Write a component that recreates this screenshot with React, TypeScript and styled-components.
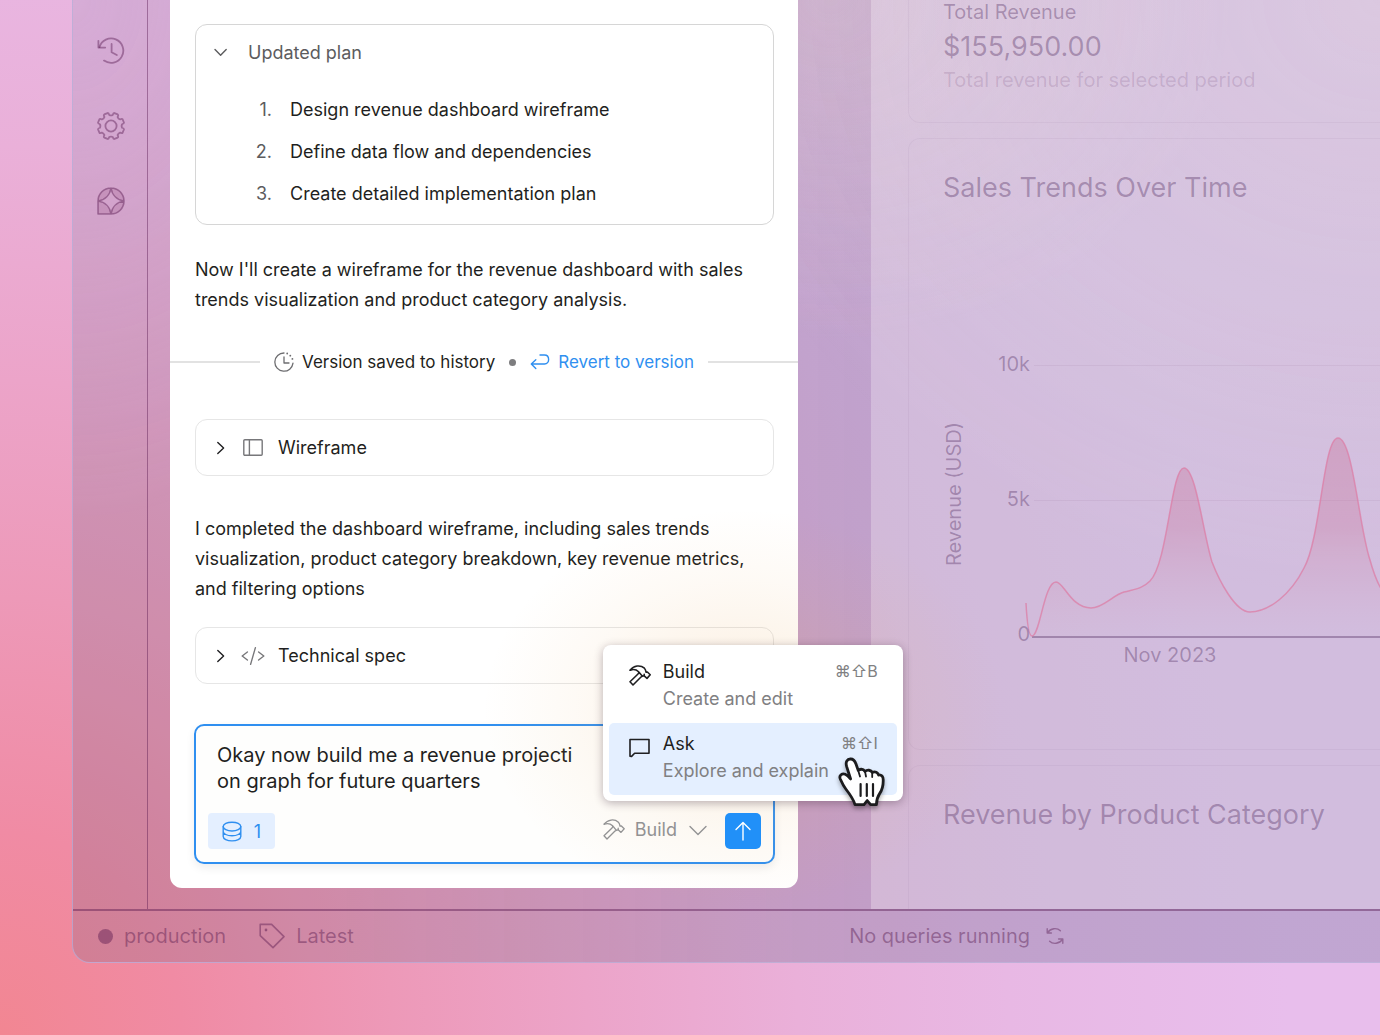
import React, { useState } from "react";
import styled, { createGlobalStyle } from "styled-components";

const ink = "#1f1f21";
const muted = "#808082";
const blue = "#2f8ff0";
const plum = "rgba(80, 18, 72, 0.41)";
const plumSoft = "rgba(60, 20, 75, 0.32)";
const plumFaint = "rgba(70, 20, 75, 0.14)";

const GlobalStyle = createGlobalStyle`
  *, *::before, *::after { box-sizing: border-box; }
  body {
    margin: 0;
    font-family: Inter, "Liberation Sans", sans-serif;
    font-size: 18px;
    color: ${ink};
  }
  button, textarea { font: inherit; color: inherit; }
  button { border: 0; padding: 0; background: none; cursor: pointer; }
  h2, p, ol { margin: 0; padding: 0; font-weight: 400; }
  svg { display: block; flex: none; }
`;

const Desktop = styled.div`
  display: flex;
  height: 100vh;
  min-height: 1035px;
  padding: 0 0 72px 72px;
  overflow: hidden;
  background: radial-gradient(
    1400px 1560px at 0 100%,
    #f28692 0%,
    #f08ba4 13%,
    #ed99b8 28%,
    #eca4c9 42%,
    #eab0d9 57%,
    #e8b8e4 72%,
    #e8beec 92%
  );
`;

const Window = styled.div`
  flex: 1;
  min-width: 0;
  display: flex;
  flex-direction: column;
  border: 1px solid rgba(185, 175, 220, 0.7);
  border-width: 0 0 1px 1px;
  border-bottom-left-radius: 18px;
  background:
    radial-gradient(700px 600px at 100% 0, rgba(255, 240, 225, 0.2), transparent),
    radial-gradient(400px 340px at 58% 0, rgba(225, 200, 195, 0.32), transparent),
    radial-gradient(400px 520px at 0 0, rgba(240, 190, 235, 0.3), transparent),
    linear-gradient(to right, transparent 20%, rgba(85, 100, 150, 0.08) 60%),
    rgba(60, 85, 115, 0.17);
`;

const Workspace = styled.div`
  flex: 1;
  min-height: 0;
  display: flex;
`;

const Sidebar = styled.nav`
  flex: 0 0 75px;
  display: flex;
  flex-direction: column;
  align-items: center;
  gap: 47px;
  padding: 37px 0 0 1px;
  border-right: 1px solid ${plum};
`;

const SideButton = styled.button`
  color: ${plum};
  width: 28px;
  height: 28px;
`;

const Chat = styled.main`
  position: relative;
  z-index: 1;
  flex: 0 1 628px;
  min-width: 0;
  display: flex;
  flex-direction: column;
  margin: 0 73px 21px 22px;
  padding: 24px 24px 24px 25px;
  background: #fff;
  border-radius: 0 0 12px 12px;
`;

const PlanCard = styled.section`
  height: 201px;
  border: 1px solid #d6d6d6;
  border-radius: 12px;
`;

const PlanHeader = styled.button`
  display: flex;
  align-items: center;
  gap: 20px;
  height: 54px;
  padding: 0 18px;
  color: #5c5c5e;
`;

const PlanList = styled.ol`
  list-style: none;
  counter-reset: step;
  padding: 10px 0 0 52px;
`;

const PlanItem = styled.li`
  counter-increment: step;
  display: grid;
  grid-template-columns: 24px 1fr;
  column-gap: 18px;
  line-height: 42px;

  &::before {
    content: counter(step) ".";
    color: #5c5c5e;
    text-align: right;
  }
`;

const Message = styled.p<{ $gap: number }>`
  margin-top: ${(p) => p.$gap}px;
  line-height: 30px;
`;

const VersionRow = styled.div`
  display: flex;
  align-items: center;
  gap: 14px;
  height: 28px;
  margin: 33px -24px 0 -25px;
  font-size: 17px;

  &::before,
  &::after {
    content: "";
    flex: 1;
    height: 2px;
    background: #e2e2e2;
  }
`;

const VersionText = styled.span`
  display: flex;
  align-items: center;
  gap: 8px;
`;

const Dot = styled.span`
  width: 7px;
  height: 7px;
  border-radius: 50%;
  background: #7d7d7f;
`;

const RevertLink = styled.a`
  display: flex;
  align-items: center;
  gap: 8px;
  color: ${blue};
  text-decoration: none;
`;

const Attachment = styled.button<{ $gap: number }>`
  display: flex;
  align-items: center;
  gap: 13px;
  height: 57px;
  margin-top: ${(p) => p.$gap}px;
  padding: 0 18px;
  border: 1px solid #e6e6e6;
  border-radius: 12px;
  text-align: left;
`;

const ArtifactIcon = styled.span`
  display: flex;
  justify-content: center;
  width: 24px;
  color: #77777a;
`;

const Composer = styled.form`
  display: flex;
  flex-direction: column;
  height: 140px;
  margin: 40px -1px 0;
  border: 2px solid ${blue};
  border-radius: 10px;
  background: #fefefd;
  box-shadow: 0 4px 10px rgba(0, 0, 0, 0.07);
`;

const Prompt = styled.textarea`
  flex: 1;
  margin: 16px 21px 0;
  padding: 0;
  border: 0;
  outline: 0;
  resize: none;
  overflow: hidden;
  background: transparent;
  font-size: 20px;
  line-height: 26px;
`;

const ComposerBar = styled.div`
  display: flex;
  align-items: center;
  height: 36px;
  margin: 0 12px 13px;
`;

const SourceChip = styled.button`
  display: flex;
  align-items: center;
  justify-content: center;
  gap: 12px;
  width: 67px;
  height: 36px;
  margin-right: auto;
  border-radius: 4px;
  background: #e4efff;
  color: ${blue};
`;

const ModePicker = styled.div`
  position: relative;
  margin-right: 18px;
`;

const ModeButton = styled.button`
  position: relative;
  display: flex;
  align-items: center;
  gap: 10px;
  height: 36px;
  padding-bottom: 3px;
  color: #929293;
`;

const Glow = styled.span`
  position: absolute;
  left: -120px;
  bottom: -60px;
  width: 520px;
  height: 400px;
  pointer-events: none;
  background: radial-gradient(closest-side, rgba(235, 170, 90, 0.2), rgba(235, 170, 90, 0.06) 65%, transparent);
`;

const SendButton = styled.button`
  position: relative;
  display: grid;
  place-items: center;
  width: 36px;
  height: 36px;
  border-radius: 5px;
  background: #2190f8;
  color: #fff;
`;

const Menu = styled.div`
  position: absolute;
  z-index: 1;
  left: 0;
  bottom: calc(100% + 12px);
  width: 300px;
  padding: 6px;
  border-radius: 8px;
  background: #fff;
  box-shadow: 0 2px 10px rgba(40, 20, 40, 0.32);
`;

const MenuItem = styled.button<{ $active?: boolean }>`
  position: relative;
  display: grid;
  grid-template-columns: 22px 1fr auto;
  column-gap: 12px;
  width: 100%;
  height: 72px;
  padding: 7px 19px 0 20px;
  border-radius: 5px;
  background: ${(p) => (p.$active ? "#e4efff" : "transparent")};
  text-align: left;
  line-height: 27px;

  svg { margin-top: 7px; }
`;

const MenuHint = styled.span`
  display: block;
  color: ${muted};
  white-space: nowrap;
`;

const MenuText = styled.span`
  min-width: 0;
`;

const Shortcut = styled.kbd`
  font-family: Inter, "DejaVu Sans", sans-serif;
  font-size: 16px;
  color: ${muted};
`;

const Pointer = styled.span`
  position: absolute;
  right: 12px;
  top: 34px;
  filter: drop-shadow(0 3px 2px rgba(0, 0, 0, 0.3));

  svg { margin: 0; }
`;

const Dashboard = styled.section`
  flex: 1 0 0;
  min-width: 0;
  display: flex;
  flex-direction: column;
  gap: 15px;
  padding-left: 37px;
  overflow: hidden;
  color: ${plumSoft};
  background: rgba(255, 250, 255, 0.28);
`;

const Panel = styled.article<{ $fill?: boolean }>`
  flex: ${(p) => (p.$fill ? "1" : "none")};
  padding: 30px 0 0 34px;
  border: 1px solid rgba(110, 70, 120, 0.06);
  border-right: 0;
  border-bottom-width: ${(p) => (p.$fill ? "0" : "1px")};
  border-radius: ${(p) => (p.$fill ? "12px 0 0 0" : "12px 0 0 12px")};
`;

const MetricPanel = styled(Panel)`
  padding-top: 0;
  padding-bottom: 32px;
  border-top: 0;
  border-top-left-radius: 0;
`;

const MetricName = styled.h2`
  font-size: 20px;
  line-height: 24px;
`;

const MetricValue = styled.p`
  font-size: 27px;
  line-height: 46px;
`;

const MetricNote = styled.p`
  font-size: 20px;
  line-height: 20px;
  color: ${plumFaint};
`;

const PanelTitle = styled.h2`
  font-size: 27px;
  line-height: 38px;
  white-space: nowrap;
`;

const Chart = styled.svg`
  width: 100%;
  height: 401px;
  margin-top: 141px;
  font-size: 20px;
`;

const StatusBar = styled.footer`
  flex: none;
  display: grid;
  grid-template-columns: 7fr 5fr;
  column-gap: 8px;
  align-items: center;
  height: 53px;
  padding: 0 0 1px 25px;
  border-top: 2px solid ${plum};
  color: ${plum};
  font-size: 20px;
`;

const StatusGroup = styled.div`
  display: flex;
  align-items: center;
  gap: 33px;
`;

const StatusItem = styled.button<{ $gap: number }>`
  display: flex;
  align-items: center;
  gap: ${(p) => p.$gap}px;
`;

const EnvDot = styled.span`
  width: 15px;
  height: 15px;
  border-radius: 50%;
  background: currentColor;
`;

const line = {
  fill: "none",
  stroke: "currentColor",
  strokeLinecap: "round" as const,
  strokeLinejoin: "round" as const,
  "aria-hidden": true,
};

const HistoryIcon = () => (
  <svg width="28" height="28" viewBox="0 0 28 28" {...line} strokeWidth="1.8">
    <path d="M2.4 10.2A12.2 12.2 0 1 1 7 23.6" />
    <path d="M1.4 3.8V10.6H8.2M14.6 7V15.2L19.8 18" />
  </svg>
);

const gearPath = Array.from({ length: 8 }, (_, i) => {
  const at = (deg: number, r: number) => {
    const a = ((i * 45 + deg) * Math.PI) / 180;
    return `${(14 + r * Math.cos(a)).toFixed(2)} ${(14 + r * Math.sin(a)).toFixed(2)}`;
  };
  return `${i === 0 ? "M" : "L"}${at(9, 11.2)}Q${at(10, 13.4)} ${at(15, 13.4)}L${at(30, 13.4)}Q${at(35, 13.4)} ${at(36, 11.2)}Q${at(45, 10.2)} ${at(54, 11.2)}`;
}).join("") + "Z";

const GearIcon = () => (
  <svg width="28" height="28" viewBox="0 0 28 28" {...line} strokeWidth="1.8">
    <path d={gearPath} />
    <circle cx="14" cy="14" r="5.6" />
  </svg>
);

const SparkIcon = () => (
  <svg width="28" height="28" viewBox="0 0 28 28" {...line} strokeWidth="1.6">
    <path
      d="M1 14A13 13 0 1 1 14 27H1Z M14 1C13 8 8 13 1 14C8 15 13 20 14 27C15 20 20 15 27 14C20 13 15 8 14 1Z"
      fill="rgba(120, 40, 90, 0.14)"
      fillRule="evenodd"
    />
  </svg>
);

const Chevron = ({ down, size = 14 }: { down?: boolean; size?: number }) => (
  <svg width={size} height={size} viewBox={`0 0 ${size} ${size}`} {...line} strokeWidth="1.4">
    {size === 14 ? (
      <path d={down ? "M1 4.4L6.6 10.2L12.2 4.4" : "M3.8 1.4L9.6 7L3.8 12.6"} />
    ) : (
      <path d="M3 6.6L11 14.6L19 6.6" />
    )}
  </svg>
);

const SavedIcon = () => (
  <svg width="20" height="20" viewBox="0 0 20 20" {...line} strokeWidth="1.3" color="#6d6d70">
    <path d="M10 1A9.1 9.1 0 1 0 19 11.2M10 5V11H15" />
    <path d="M13.2 1.5V1.6M16.3 3.6V3.7M18.4 6.8V6.9" strokeWidth="1.8" />
  </svg>
);

const RevertIcon = () => (
  <svg width="20" height="18" viewBox="0 0 20 18" {...line} strokeWidth="1.4">
    <path d="M10 2H14.5C20 2 20 11 14.5 11H1.5M5.8 6.8L1.3 11L5.8 15.4" />
  </svg>
);

const LayoutIcon = () => (
  <svg width="20" height="17" viewBox="0 0 20 17" {...line} strokeWidth="1.4">
    <rect x="0.8" y="0.8" width="18.4" height="15.4" rx="1" />
    <path d="M6.4 1V16" />
  </svg>
);

const CodeIcon = () => (
  <svg width="24" height="20" viewBox="0 0 24 20" {...line} strokeWidth="1.4">
    <path d="M6.4 6L1.2 10L6.4 14M17.6 6L22.8 10L17.6 14M14.4 1.6L9.6 18.4" />
  </svg>
);

const HammerIcon = ({ weight = 1.5 }: { weight?: number }) => (
  <svg width="22" height="21" viewBox="0 0 22 21" {...line} strokeWidth={weight}>
    <path d="M1.2 5.2C4.6 0.4 11.4 -0.4 15.4 3.2C16.8 4.6 16.8 6 17 7.2L18.4 7L21.2 9.8L18 13.4L15.2 10.8V9.2" />
    <path d="M1.2 5.2C4.4 4 7 4.2 9.6 6.8C9.8 7.4 9.6 8.4 9 9L1 16.8L4 20L12 12C12.6 11.2 13.8 11 15.2 10.8M9.8 7L13 10.8" />
  </svg>
);

const BubbleIcon = () => (
  <svg width="22" height="22" viewBox="0 0 22 22" {...line} strokeWidth="1.6">
    <path d="M1 2.5H20V16.2H5.6L2.6 19.4L1 19.2Z" />
  </svg>
);

const DatabaseIcon = () => (
  <svg width="20" height="21" viewBox="0 0 20 21" {...line} strokeWidth="1.4">
    <ellipse cx="10" cy="5.6" rx="8.8" ry="4.4" />
    <path d="M1.2 5.6V15.4C1.2 17.8 5 19.9 10 19.9S18.8 17.8 18.8 15.4V5.6M1.2 10.4C1.2 12.8 5 14.8 10 14.8S18.8 12.8 18.8 10.4" />
  </svg>
);

const ArrowUpIcon = () => (
  <svg width="20" height="20" viewBox="0 0 20 20" {...line} strokeWidth="1.4">
    <path d="M10 19V1.6M3 8.6L10 1.6L17 8.6" />
  </svg>
);

const TagIcon = () => (
  <svg width="26" height="26" viewBox="0 0 26 26" {...line} strokeWidth="1.6">
    <path d="M1.2 1.4H12.6L25 13.6L14 24.6L1.2 12.6Z" />
    <circle cx="7" cy="7" r="0.6" fill="currentColor" />
  </svg>
);

const SyncIcon = () => (
  <svg width="18" height="18" viewBox="0 0 18 18" {...line} strokeWidth="1.4">
    <path d="M1.2 1.8V6H5.4M1.6 5.6C4.6 1 11 0.4 14.4 3.8M16.8 16.2V12H12.6M16.4 12.4C13.4 17 7 17.6 3.6 14.2" />
  </svg>
);

const HandIcon = () => (
  <svg width="47" height="51" viewBox="0 0 47 51" aria-hidden="true" strokeLinejoin="round" strokeLinecap="round">
    <path
      d="M12.6 22L8.6 9.4C7.2 4.4 9.4 2.2 12.4 2C15.4 1.8 16.8 3.8 18 7L20.2 13.4C23 11.6 25.6 12.4 27 14.4C29.4 12.4 33 13 34.2 15.4C37.4 14 39.8 15.6 40.6 18C43.6 17.6 45.2 19.6 45.2 22.6C45.4 29 44.6 32.4 41.6 36.6C39.4 39.8 38.6 42 38.4 47.6H32.6L29.2 43.6L26 47.6H17C15.4 42 12 37.4 7.8 32C5 28.4 3.8 25.4 2.2 21.8C0.8 18.4 4.2 16 7.2 17.2C9.6 18.2 11 20 12.6 22Z"
      fill="#fff"
      stroke="#1c1c1e"
      strokeWidth="2.8"
    />
    <path d="M20.2 13.4L22 19.5M27 14.4L28 19.5M34.2 15.4V20" fill="none" stroke="#1c1c1e" strokeWidth="1.8" />
    <path d="M22.6 27V39M28.8 27V39M35 27V39" fill="none" stroke="#1c1c1e" strokeWidth="2.2" />
  </svg>
);

const curve =
  "M83 255C84 275 86 288 89 288C97 288 101 234 113 234C121 234 128 260 148 260C160 260 170 247 181 244C192 241 199 241 207 233C225 215 228 120 241 120C253 120 260 185 269 214C276 232 292 264 307 264C326 264 348 246 361 220C378 190 380 90 395 90C410 90 416 180 427 212C433 234 440 248 455 262L480 270";

const RevenueChart = () => (
  <Chart role="img" aria-label="Sales trends over time">
    <defs>
      <linearGradient id="area" x1="0" y1="90" x2="0" y2="288" gradientUnits="userSpaceOnUse">
        <stop offset="0" stopColor="#c8648c" stopOpacity="0.32" />
        <stop offset="0.45" stopColor="#c8648c" stopOpacity="0.26" />
        <stop offset="1" stopColor="#d896b4" stopOpacity="0" />
      </linearGradient>
    </defs>
    <g stroke={plumFaint} strokeOpacity="0.4">
      <path d="M91 17.5H900M91 152.5H900" />
    </g>
    <path d={`${curve}V289H89Z`} fill="url(#area)" />
    <path d="M89 289H900" stroke={plumSoft} strokeWidth="2" />
    <path d={curve} fill="none" stroke="#dc7ea6" strokeOpacity="0.75" strokeWidth="1.5" />
    <g fill={plumSoft}>
      <text x="87" y="23" textAnchor="end">10k</text>
      <text x="87" y="158" textAnchor="end">5k</text>
      <text x="87" y="293" textAnchor="end">0</text>
      <text x="227" y="314" textAnchor="middle">Nov 2023</text>
      <text transform="translate(18 146) rotate(-90)" textAnchor="middle">Revenue (USD)</text>
    </g>
  </Chart>
);

export default function App() {
  const [prompt, setPrompt] = useState("Okay now build me a revenue projecti\non graph for future quarters");

  return (
    <>
      <GlobalStyle />
      <Desktop>
        <Window>
          <Workspace>
            <Sidebar>
              <SideButton aria-label="History"><HistoryIcon /></SideButton>
              <SideButton aria-label="Settings"><GearIcon /></SideButton>
              <SideButton aria-label="Assistant"><SparkIcon /></SideButton>
            </Sidebar>

            <Chat>
              <PlanCard>
                <PlanHeader aria-expanded="true">
                  <Chevron down />
                  Updated plan
                </PlanHeader>
                <PlanList>
                  <PlanItem>Design revenue dashboard wireframe</PlanItem>
                  <PlanItem>Define data flow and dependencies</PlanItem>
                  <PlanItem>Create detailed implementation plan</PlanItem>
                </PlanList>
              </PlanCard>

              <Message $gap={30}>
                Now I'll create a wireframe for the revenue dashboard with sales trends visualization and product category analysis.
              </Message>

              <VersionRow>
                <VersionText><SavedIcon />Version saved to history</VersionText>
                <Dot />
                <RevertLink href="#revert"><RevertIcon />Revert to version</RevertLink>
              </VersionRow>

              <Attachment $gap={43}>
                <Chevron />
                <ArtifactIcon><LayoutIcon /></ArtifactIcon>
                Wireframe
              </Attachment>

              <Message $gap={38}>
                I completed the dashboard wireframe, including sales trends visualization, product category breakdown, key revenue metrics, and filtering options
              </Message>

              <Attachment $gap={23}>
                <Chevron />
                <ArtifactIcon><CodeIcon /></ArtifactIcon>
                Technical spec
              </Attachment>

              <Composer onSubmit={(e) => e.preventDefault()}>
                <Prompt aria-label="Prompt" value={prompt} onChange={(e) => setPrompt(e.target.value)} />
                <ComposerBar>
                  <SourceChip type="button"><DatabaseIcon />1</SourceChip>
                  <ModePicker>
                    <Glow />
                    <ModeButton type="button" aria-haspopup="menu" aria-expanded="true">
                      <HammerIcon weight={1.3} />
                      Build
                      <Chevron down size={20} />
                    </ModeButton>
                    <Menu role="menu">
                      <MenuItem type="button" role="menuitem">
                        <HammerIcon weight={1.6} />
                        <MenuText>Build<MenuHint>Create and edit</MenuHint></MenuText>
                        <Shortcut>⌘⇧B</Shortcut>
                      </MenuItem>
                      <MenuItem type="button" role="menuitem" $active>
                        <BubbleIcon />
                        <MenuText>Ask<MenuHint>Explore and explain</MenuHint></MenuText>
                        <Shortcut>⌘⇧I</Shortcut>
                        <Pointer><HandIcon /></Pointer>
                      </MenuItem>
                    </Menu>
                  </ModePicker>
                  <SendButton type="submit" aria-label="Send"><ArrowUpIcon /></SendButton>
                </ComposerBar>
              </Composer>
            </Chat>

            <Dashboard>
              <MetricPanel>
                <MetricName>Total Revenue</MetricName>
                <MetricValue>$155,950.00</MetricValue>
                <MetricNote>Total revenue for selected period</MetricNote>
              </MetricPanel>
              <Panel>
                <PanelTitle>Sales Trends Over Time</PanelTitle>
                <RevenueChart />
              </Panel>
              <Panel $fill>
                <PanelTitle>Revenue by Product Category</PanelTitle>
              </Panel>
            </Dashboard>
          </Workspace>

          <StatusBar>
            <StatusGroup>
              <StatusItem $gap={11}><EnvDot />production</StatusItem>
              <StatusItem $gap={11}><TagIcon />Latest</StatusItem>
            </StatusGroup>
            <StatusGroup>
              <StatusItem $gap={16}>No queries running<SyncIcon /></StatusItem>
            </StatusGroup>
          </StatusBar>
        </Window>
      </Desktop>
    </>
  );
}
